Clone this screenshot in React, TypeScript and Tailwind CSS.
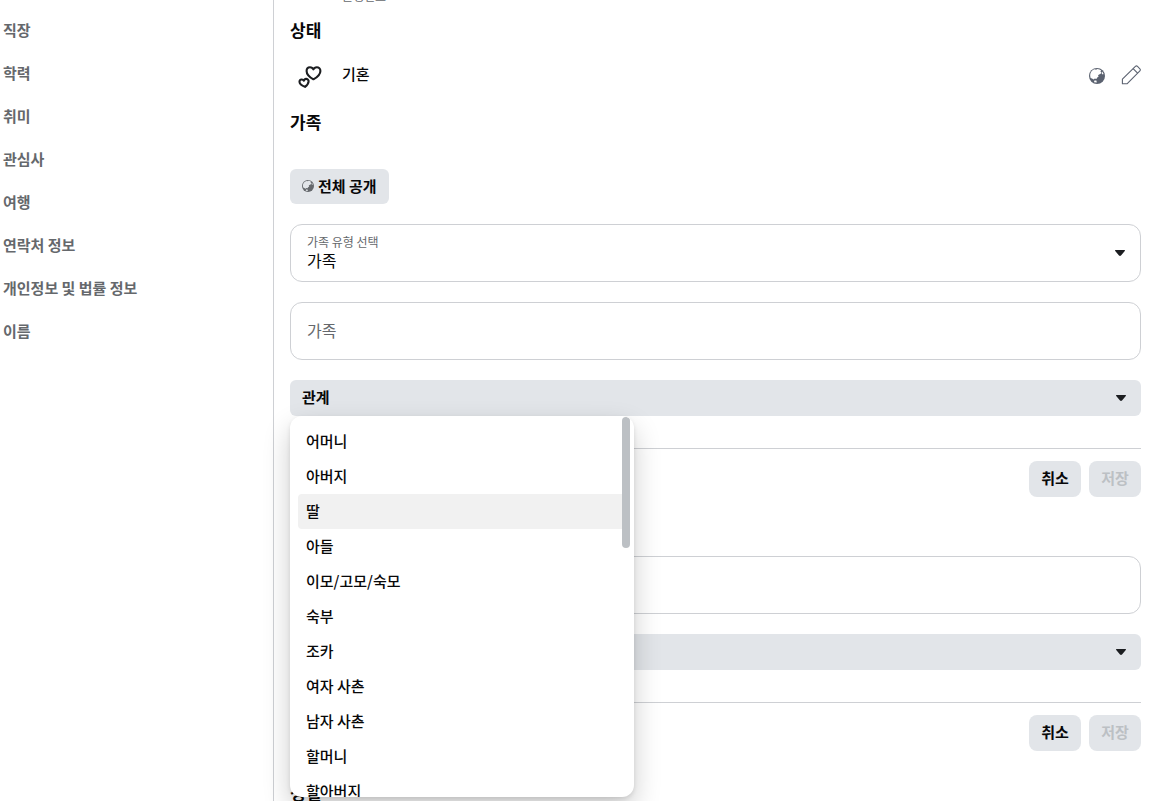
import { useState } from "react";
import clsx from "clsx";

const SECTIONS = ["직장", "학력", "취미", "관심사", "여행", "연락처 정보", "개인정보 및 법률 정보", "이름"];

const RELATIONS = [
  "어머니",
  "아버지",
  "딸",
  "아들",
  "이모/고모/숙모",
  "숙부",
  "조카",
  "여자 사촌",
  "남자 사촌",
  "할머니",
  "할아버지",
];

function CaretIcon({ className }: { className?: string }) {
  return (
    <svg viewBox="0 0 10 6" aria-hidden="true" className={clsx("h-[6px] w-[10px] fill-[#1c1e21]", className)}>
      <path d="M0.6 0h8.8c.6 0 .8.7.4 1.1L6 5.5c-.5.6-1.5.6-2 0L.2 1.1C-.2.7 0 0 .6 0z" />
    </svg>
  );
}

function GlobeIcon({ className, landClassName }: { className?: string; landClassName: string }) {
  return (
    <svg viewBox="0 0 16 16" aria-hidden="true" className={className}>
      <circle cx="8" cy="8" r="8" fill="currentColor" />
      <path
        className={landClassName}
        d="M1.2 8C1 4.6 3 2 5.8 1.3L7 1.8 8.4 1.1C10 1.2 11.2 1.7 12.2 2.6L11.4 3.6 12.4 4.6 11.4 6 10 6.6 9 7.4 9.6 8.8 8.2 9.6 7.4 11 5.8 10.6 4.6 11.6 3 10.6 1.6 10z"
      />
      <path className={landClassName} d="M5.4 12.6 7.4 12.6 7.8 14.6 5 14.2zM13.2 3.6 14.6 6 13.6 6.4 12.6 5.2z" />
    </svg>
  );
}

function PencilIcon() {
  return (
    <svg
      viewBox="0 0 20 20"
      aria-hidden="true"
      className="size-5"
      fill="none"
      stroke="currentColor"
      strokeWidth="1.1"
      strokeLinejoin="round"
    >
      <path d="M1.4 18.8v-4.6L14.4 1.4c.6-.6 1.5-.6 2.1 0l2.4 2.4c.6.6.6 1.5 0 2.1L6 18.8H1.4z" />
      <path d="M12.1 3.7l4.5 4.4" />
    </svg>
  );
}

function HeartsIcon() {
  return (
    <svg
      viewBox="0 0 24 24"
      aria-hidden="true"
      className="size-6 text-[#1c1e21]"
      fill="none"
      stroke="currentColor"
      strokeWidth="2.1"
      strokeLinejoin="round"
    >
      <path d="M15.4 15.3C11 12.8 8.6 10.1 8.6 6.9c0-2.2 1.5-3.7 3.4-3.7 1.6 0 2.8.8 3.4 2.2.6-1.4 1.8-2.2 3.4-2.2 1.9 0 3.6 1.5 3.6 3.7 0 3.2-2.6 5.9-7 8.4z" />
      <path d="M7 22.9c-3-1.2-5.3-2.8-5.5-4.9-.1-1.4.9-2.4 2.1-2.5 1-.1 1.8.4 2.3 1.2.3-.9 1-1.6 2-1.8 1.2-.2 2.4.6 2.6 1.9.4 2-1 4.1-3.5 6.1z" />
    </svg>
  );
}

function RelationMenu({ selected, onSelect }: { selected: string; onSelect: (relation: string) => void }) {
  return (
    <div className="absolute top-full left-0 z-10 w-[344px] overflow-hidden rounded-xl bg-white shadow-[0_12px_28px_rgba(0,0,0,0.2),0_2px_4px_rgba(0,0,0,0.1)]">
      <ul role="listbox" aria-label="관계" className="h-[381px] overflow-hidden p-2">
        {RELATIONS.map((relation) => (
          <li key={relation} role="option" aria-selected={relation === selected}>
            <button
              type="button"
              onClick={() => onSelect(relation)}
              className={clsx(
                "block h-[35px] w-full rounded px-2 pb-0.5 text-left text-[15px] leading-5 font-medium text-[#080809]",
                relation === selected && "bg-[#f1f1f1]"
              )}
            >
              {relation}
            </button>
          </li>
        ))}
      </ul>
      <div className="absolute top-px right-1 h-[131px] w-2 rounded-full bg-[#bcc0c4]" />
    </div>
  );
}

function RelationForm({ id, defaultOpen = false }: { id: string; defaultOpen?: boolean }) {
  const [open, setOpen] = useState(defaultOpen);
  const [relation, setRelation] = useState("딸");

  return (
    <form onSubmit={(e) => e.preventDefault()}>
      <input
        id={id}
        type="text"
        aria-label="가족"
        placeholder="가족"
        className="block h-[58px] w-full rounded-xl border border-[#ced0d4] px-4 pb-0.5 text-base text-[#080809] placeholder:text-[#65686c]"
      />
      <div className="relative mt-5">
        <button
          type="button"
          aria-haspopup="listbox"
          aria-expanded={open}
          onClick={() => setOpen(!open)}
          className="flex h-9 w-full items-center justify-between rounded-md bg-[#e2e5e9] pr-[15px] pl-3 text-[15px] leading-5 font-bold"
        >
          <span className="pb-0.5">관계</span>
          <CaretIcon />
        </button>
        {open && (
          <RelationMenu
            selected={relation}
            onSelect={(value) => {
              setRelation(value);
              setOpen(false);
            }}
          />
        )}
      </div>
      <div className="mt-8 flex justify-end gap-2 border-t border-[#ced0d4] pt-3 text-[15px] leading-5 font-bold">
        <button type="button" className="h-9 w-[52px] rounded-lg bg-[#e2e5e9] pb-0.5">
          취소
        </button>
        <button type="submit" disabled className="h-9 w-[52px] rounded-lg bg-[#e2e5e9] pb-0.5 text-[#bcc0c4]">
          저장
        </button>
      </div>
    </form>
  );
}

export default function App() {
  return (
    <div className="flex h-screen overflow-hidden bg-white font-['Noto_Sans_CJK_KR',sans-serif] text-[#080809]">
      <nav className="w-[273px] shrink-0 pt-2 pl-[3px]">
        {SECTIONS.map((section) => (
          <a key={section} href="#" className="block h-[43px] text-[15px] leading-[43px] font-bold text-[#65686c]">
            {section}
          </a>
        ))}
      </nav>

      <main className="min-w-0 flex-1 border-l border-[#ced0d4] pr-[29px] pl-4">
        <p className="-mt-3 pl-[52px] text-xs text-[#65686c]">출생연도</p>

        <h2 className="mt-4 text-[17px] leading-5 font-bold">상태</h2>
        <div className="mt-6 flex h-6 items-center">
          <div className="flex w-[52px] pl-2">
            <HeartsIcon />
          </div>
          <p className="flex-1 pb-1 text-[15px] leading-5 font-medium">기혼</p>
          <div className="flex items-center gap-4 text-[#5b6270]">
            <button type="button" aria-label="전체 공개">
              <GlobeIcon className="size-4" landClassName="fill-white" />
            </button>
            <button type="button" aria-label="수정" className="pb-0.5">
              <PencilIcon />
            </button>
          </div>
        </div>

        <h2 className="mt-6 text-[17px] leading-5 font-bold">가족</h2>
        <button
          type="button"
          className="mt-[37px] flex h-[35px] items-center gap-1 rounded-md bg-[#e2e5e9] px-3 pb-px text-[15px] leading-5 font-bold"
        >
          <GlobeIcon className="size-3 text-[#65686c]" landClassName="fill-[#e2e5e9]" />
          전체 공개
        </button>

        <div className="relative mt-5 mb-5">
          <label htmlFor="family-type" className="absolute top-[10px] left-[17px] text-xs text-[#65686c]">
            가족 유형 선택
          </label>
          <select
            id="family-type"
            className="block h-[58px] w-full appearance-none rounded-xl border border-[#ced0d4] px-4 pt-[14px] text-base"
          >
            <option>가족</option>
            <option>친척</option>
          </select>
          <CaretIcon className="pointer-events-none absolute top-[26px] right-4" />
        </div>

        <RelationForm id="family-member-1" defaultOpen />
        <div className="mt-[59px]">
          <RelationForm id="family-member-2" />
        </div>

        <h2 className="mt-8 text-[17px] leading-5 font-bold">성별</h2>
      </main>
    </div>
  );
}
